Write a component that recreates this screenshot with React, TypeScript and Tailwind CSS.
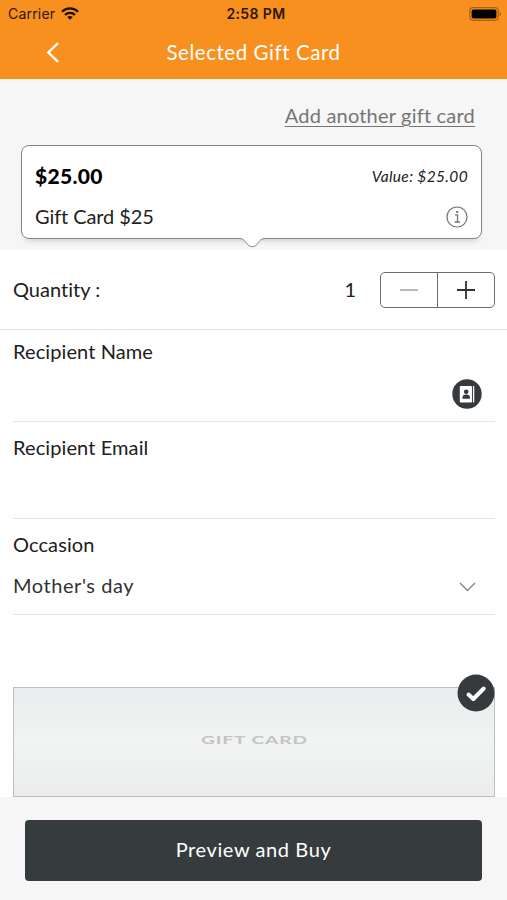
import React from "react";

interface FieldProps {
    label: string;
    children?: React.ReactNode;
}

const StatusBar = () => {
    return (
        <div className="relative flex h-7 items-center justify-between pl-2 pr-[5px] font-[Inter,sans-serif] text-[14px] text-[#2b1703]">
            <div className="flex items-center gap-[6px] pb-[2px]">
                <span className="tracking-[0.2px]">Carrier</span>
                <svg width="18" height="13" viewBox="0 0 18 13" fill="none" stroke="#1d1003" strokeWidth="2.3">
                    <path d="M1 4.7C5.4 0.3 12.6 0.3 17 4.7" />
                    <path d="M4 7.9C6.8 5.1 11.2 5.1 14 7.9" />
                    <path d="M6.2 10C7.8 8.5 10.2 8.5 11.8 10L9 12.8Z" fill="#1d1003" stroke="none" />
                </svg>
            </div>
            <span className="absolute inset-x-0 pb-[2px] pl-[5px] text-center text-[14px] font-semibold tracking-[0.4px]">2:58 PM</span>
            <svg className="mb-px" width="33" height="14" viewBox="0 0 33 14" fill="none">
                <rect x="0.8" y="0.7" width="28.4" height="12.6" rx="3.5" stroke="#a8600f" strokeWidth="1.2" />
                <rect x="2.6" y="2.4" width="24.8" height="9.2" rx="1.8" fill="#000" />
                <path d="M30.7 4.8C32 5.5 32 8.5 30.7 9.2Z" fill="#8a4e0c" />
            </svg>
        </div>
    );
};

const Header = () => {
    return (
        <header className="h-[79px] bg-[#f89020]">
            <StatusBar />
            <div className="relative flex h-[50px] items-center justify-center pb-[2px] text-white">
                <svg className="absolute left-[46px] top-[14px]" width="14" height="21" viewBox="0 0 14 21" fill="none" stroke="#fff" strokeWidth="2.3">
                    <path d="M12 1.2L2.3 10.4L12 19.8" />
                </svg>
                <h1 className="text-[20.5px] tracking-[0.55px]">Selected Gift Card</h1>
            </div>
        </header>
    );
};

const GiftCard = () => {
    return (
        <div className="relative ml-[21px] mt-4 h-[94px] w-[461px] rounded-[8px] border border-[#858585] bg-white px-[13px] pt-[16px] shadow-[0_5px_6px_-4px_rgba(0,0,0,0.2)]">
            <div className="flex h-7 items-center justify-between">
                <p className="text-[21px] font-black tracking-[0.3px] text-black">$25.00</p>
                <p className="pt-[2px] text-[15.5px] italic tracking-[0.35px] text-[#222]">Value: $25.00</p>
            </div>
            <div className="mt-3 flex h-7 items-center justify-between">
                <p className="text-[20px] tracking-[-0.1px] text-[#222]">Gift Card $25</p>
                <svg className="mt-[2px]" width="22" height="22" viewBox="0 0 22 22" fill="none" stroke="#757575">
                    <circle cx="11" cy="11" r="10" strokeWidth="1.2" />
                    <path d="M9 8.9H11.5V16M8.7 16H14" strokeWidth="1.3" />
                    <circle cx="11.2" cy="5.9" r="1.2" fill="#757575" stroke="none" />
                </svg>
            </div>
            <svg className="absolute left-[216px] top-[91px]" width="28" height="11" viewBox="0 0 28 11">
                <path d="M0 0H28V1.5C22.5 1.5 22 3.5 20 6.2C17 10.8 11.5 10.8 8.5 6.2C6 3 5.5 1.5 0 1.5Z" fill="#fff" />
                <path d="M0 1.5C5.5 1.5 6 3 8.5 6.2C11.5 10.8 17 10.8 20 6.2C22 3.5 22.5 1.5 28 1.5" fill="none" stroke="#858585" />
            </svg>
        </div>
    );
};

const Quantity = () => {
    return (
        <div className="flex h-20 items-center border-b border-[#dedede] pl-[13px] pr-3">
            <p className="flex-1 pb-[2px] text-[20px] tracking-[0.01px]">Quantity :</p>
            <p className="mr-[24px] pb-[2px] text-[20px]">1</p>
            <div className="flex h-9 w-[115px] rounded-[5px] border border-[#6a6c6d]">
                <button className="flex flex-1 items-center justify-center border-r border-[#6a6c6d]">
                    <svg width="20" height="20" stroke="#a0a0a0" strokeWidth="1.5">
                        <path d="M1 10H19" />
                    </svg>
                </button>
                <button className="flex flex-1 items-center justify-center">
                    <svg width="20" height="20" stroke="#303334" strokeWidth="1.8">
                        <path d="M1 10H19M10 1V19" />
                    </svg>
                </button>
            </div>
        </div>
    );
};

const Field = ({ label, children }: FieldProps) => {
    return (
        <div className="ml-[13px] mr-3 border-b border-[#e6e6e6]">
            <p className="text-[20px] leading-[26px] tracking-[0.1px]">{label}</p>
            {children}
        </div>
    );
};

const App = () => {
    return (
        <div className="flex h-[900px] w-[507px] flex-col overflow-hidden bg-white font-[Lato,sans-serif] text-[#202020]">
            <Header />
            <section className="h-[171px] bg-[#f6f6f6] pt-[22px]">
                <div className="flex h-7 justify-end pr-8">
                    <a className="text-[20px] leading-7 tracking-[0.2px] text-[#757575] underline decoration-1 underline-offset-3">Add another gift card</a>
                </div>
                <GiftCard />
            </section>
            <Quantity />
            <div className="flex flex-col gap-3 pt-2">
                <Field label="Recipient Name">
                    <div className="flex h-[57px] justify-end pr-[13px] pt-[15px]">
                        <svg width="30" height="30" viewBox="0 0 30 30">
                            <circle cx="15" cy="15" r="14.7" fill="#353b3d" />
                            <rect x="7.8" y="7" width="12.2" height="16.5" rx="0.8" fill="#fff" />
                            <path d="M21.6 7V23.5" stroke="#fff" strokeWidth="1.3" />
                            <circle cx="14.2" cy="12.7" r="2.3" fill="#353b3d" />
                            <path d="M10.5 19.8V18C10.5 14.7 17.9 14.7 17.9 18V19.8Z" fill="#353b3d" />
                        </svg>
                    </div>
                </Field>
                <Field label="Recipient Email">
                    <div className="h-[58px]" />
                </Field>
                <Field label="Occasion">
                    <div className="flex h-[57px] items-center justify-between pb-[2px] pr-[19px]">
                        <p className="text-[20px] tracking-[0.55px] text-[#333]">Mother's day</p>
                        <svg className="mt-[5px]" width="17" height="10" viewBox="0 0 17 10" fill="none" stroke="#858585" strokeWidth="1.4">
                            <path d="M1 1L8.5 8.5L16 1" />
                        </svg>
                    </div>
                </Field>
            </div>
            <div className="relative ml-[13px] mt-[72px] flex h-[110px] w-[482px] items-center justify-center border border-[#bcbebf] bg-linear-to-b from-[#eaeced] via-[#f2f3f3] to-[#ebecec] pb-[4px]">
                <span className="scale-x-[1.6] text-[12px] font-bold tracking-[0.55px] text-[#c2c4c5]">GIFT CARD</span>
                <svg className="absolute -right-px -top-[14px]" width="38" height="38" viewBox="0 0 38 38">
                    <circle cx="19" cy="19" r="18.5" fill="#353b3d" />
                    <path d="M11.5 20.5L16.3 25L26.7 14.5" fill="none" stroke="#fff" strokeWidth="4" strokeLinecap="round" strokeLinejoin="round" />
                </svg>
            </div>
            <footer className="flex-1 bg-[#f6f6f6] px-[25px] pt-[23px]">
                <button className="h-[61px] w-[457px] rounded-[4px] bg-[#363c3e] pb-[4px] text-[20px] tracking-[0.6px] text-white">Preview and Buy</button>
            </footer>
        </div>
    );
};

export default App;
